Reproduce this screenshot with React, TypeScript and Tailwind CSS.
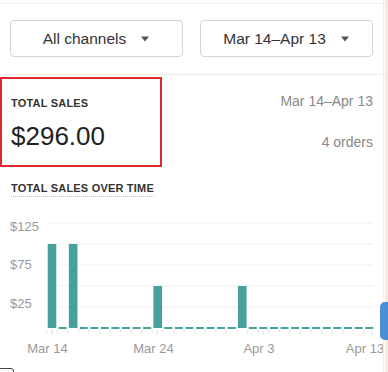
import React from "react";

const TEAL = "#46a09c";

function Caret() {
  return (
    <svg width="10" height="6" viewBox="0 0 10 6" className="ml-[14px]">
      <path d="M1 0.5 L9 0.5 L5 5.5 Z" fill="#555" />
    </svg>
  );
}

function Chart() {
  const bars: Record<number, number> = { 0: 100, 2: 100, 10: 50, 18: 50 };
  const dayX = (i: number) => 52 + i * 10.57;
  const base = 127;
  const scale = 21 / 25;
  const days = Array.from({ length: 31 }, (_, i) => i);
  const grid = [22, 43, 64, 85, 106];
  return (
    <svg width="388" height="160" viewBox="0 0 388 160" className="block">
      {grid.map((y) => (
        <line key={y} x1="48" x2="373" y1={y} y2={y} stroke="#efefef" strokeWidth="1" />
      ))}
      <g fill="#999" fontSize="13" fontFamily="'Liberation Sans', Arial, sans-serif">
        <text x="10" y="29.5">$125</text>
        <text x="10" y="68">$75</text>
        <text x="10" y="107">$25</text>
      </g>
      {days.map((i) => (
        <line key={"t" + i} x1={dayX(i) - 5.3} x2={dayX(i) - 5.3} y1={base + 2} y2={base + 5} stroke="#e2e2e2" strokeWidth="1" />
      ))}
      {[52, 157, 263, 372].map((x) => (
        <line key={"m" + x} x1={x} x2={x} y1={base + 2} y2={base + 7} stroke="#ddd" strokeWidth="1" />
      ))}
      {days.map((i) => {
        const v = bars[i];
        const cx = dayX(i);
        if (v) {
          const h = v * scale;
          return <rect key={i} x={cx - 4.3} y={base - h} width="8.6" height={h} fill={TEAL} />;
        }
        return <line key={i} x1={cx - 4} x2={cx + 4} y1={base} y2={base} stroke={TEAL} strokeWidth="2" />;
      })}
      <g fill="#999" fontSize="13" fontFamily="'Liberation Sans', Arial, sans-serif" textAnchor="middle">
        <text x="47.5" y="152">Mar 14</text>
        <text x="153.5" y="152">Mar 24</text>
        <text x="259" y="152">Apr 3</text>
        <text x="365" y="152">Apr 13</text>
      </g>
    </svg>
  );
}

export default function App() {
  return (
    <div
      className="relative w-[388px] h-[372px] overflow-hidden bg-white"
      style={{ fontFamily: "'Liberation Sans', Arial, sans-serif" }}
    >
      <div className="pt-[3px]">
        <div className="border-t border-[#f0f0f0]">
          <div className="flex gap-[17px] pl-[10px] pt-[16px] pb-[17px] border-b border-[#ececec]">
            <div className="flex h-[37px] w-[173px] items-center justify-center rounded-[4px] border border-[#d4d4d4] text-[15.5px] text-[#333]">
              All channels
              <Caret />
            </div>
            <div className="flex h-[37px] w-[173px] items-center justify-center rounded-[4px] border border-[#d4d4d4] text-[15.5px] text-[#333]">
              Mar 14–Apr 13
              <Caret />
            </div>
          </div>
          <div className="flex justify-between pt-[2px]">
            <div className="h-[90px] w-[162px] border-[2.5px] border-[#dc2a2f] pl-[9px] pt-[16px]">
              <div className="text-[11px] leading-[16px] font-semibold tracking-[0.2px] text-[#333]">TOTAL SALES</div>
              <div className="mt-[9px] text-[26px] leading-[32px] text-[#222]">$296.00</div>
            </div>
            <div className="flex flex-col items-end pr-[15px] pt-[14px] text-[14px] leading-[20px] text-[#888]">
              <div>Mar 14–Apr 13</div>
              <div className="mt-[21px]">4 orders</div>
            </div>
          </div>
          <div className="pl-[11px] pt-[8px]">
            <span className="text-[11px] leading-[16px] font-semibold tracking-[0.2px] text-[#333] border-b border-dotted border-[#bbb] pb-[2px]">
              TOTAL SALES OVER TIME
            </span>
          </div>
          <div className="mt-[2px]">
            <Chart />
          </div>
        </div>
      </div>
      <div className="absolute right-0 top-0 h-full w-[3px] bg-[#f6edd9]" />
      <div className="absolute right-[4px] top-0 h-full w-px bg-[#eeeeee]" />
      <div className="absolute right-0 top-[302px] h-[38px] w-[8px] rounded-l-[5px] bg-[#4a8fd6]" />
      <div className="absolute left-[-2px] top-[368px] h-[10px] w-[16px] rounded-[3px] border border-[#444]" />
    </div>
  );
}
